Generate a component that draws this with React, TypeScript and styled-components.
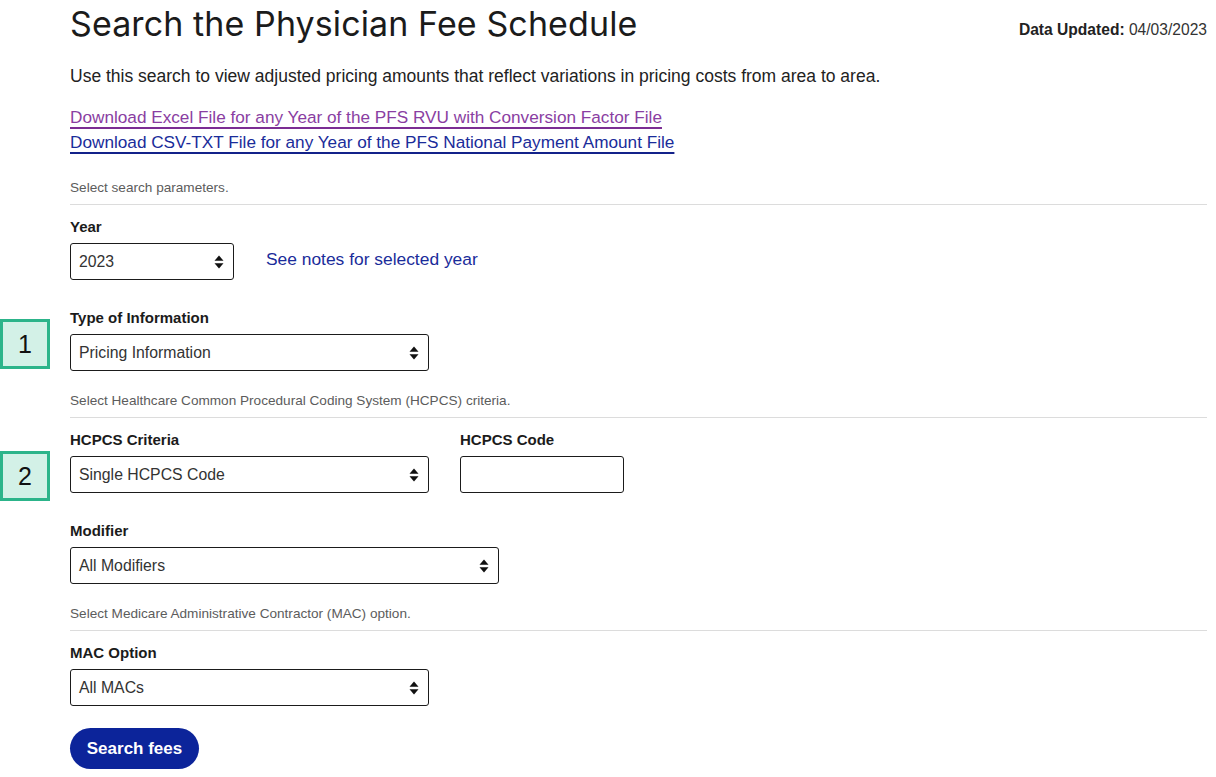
import React from "react";
import styled, { createGlobalStyle } from "styled-components";

const Global = createGlobalStyle`
  html, body { margin: 0; padding: 0; background: #fff; }
  body { font-family: "Liberation Sans", Arial, sans-serif; color: #1b1b1b; }
  * { box-sizing: border-box; }
`;

const Page = styled.div`
  padding: 0 9px 40px 70px;
  width: 1216px;
`;

const Header = styled.div`
  display: flex;
  justify-content: space-between;
  align-items: flex-start;
`;

const Title = styled.h1`
  margin: 0;
  font-family: Inter, "Open Sans", sans-serif;
  font-weight: 400;
  font-size: 34px;
  line-height: 48px;
  color: #1b1b1b;
  letter-spacing: 0.1px;
`;

const Updated = styled.div`
  margin-top: 20px;
  font-size: 15.6px;
  line-height: 20px;
  color: #333;
  b { color: #222; }
`;

const Intro = styled.p`
  margin: 16px 0 0;
  font-size: 17.5px;
  line-height: 24px;
  color: #222;
`;

const Links = styled.div`
  margin-top: 17px;
  display: flex;
  flex-direction: column;
  align-items: flex-start;
`;

const FileLink = styled.a<{ $visited?: boolean }>`
  font-size: 17.2px;
  line-height: 25px;
  color: ${(p) => (p.$visited ? "#8a3ea2" : "#1a2c9a")};
  text-decoration: underline;
  text-decoration-thickness: 2px;
  text-underline-offset: 4px;
  text-decoration-color: ${(p) => (p.$visited ? "#7b2d93" : "#13228a")};
`;

const Hint = styled.div<{ $top: number }>`
  margin-top: ${(p) => p.$top}px;
  font-size: 13.6px;
  line-height: 18px;
  color: #5c5c5c;
  padding-bottom: 7px;
  border-bottom: 1px solid #dcdcdc;
`;

const Row = styled.div<{ $top: number }>`
  position: relative;
  margin-top: ${(p) => p.$top}px;
  display: flex;
  align-items: flex-end;
  gap: 31px;
`;

const Field = styled.div`
  display: flex;
  flex-direction: column;
`;

const Label = styled.label`
  font-size: 15px;
  line-height: 20px;
  font-weight: 700;
  color: #1b1b1b;
  margin-bottom: 6px;
`;

const SelectBox = styled.div<{ $w: number }>`
  width: ${(p) => p.$w}px;
  height: 37px;
  border: 1.5px solid #1b1b1b;
  border-radius: 3px;
  display: flex;
  align-items: center;
  justify-content: space-between;
  padding: 0 9px 0 8px;
  font-size: 15.8px;
  color: #333;
  background: #fff;
`;

const TextInput = styled.div`
  width: 164px;
  height: 37px;
  border: 1.5px solid #1b1b1b;
  border-radius: 3px;
  background: #fff;
`;

const NotesLink = styled.a`
  font-size: 17.4px;
  line-height: 24px;
  color: #1a2c9a;
  text-decoration: none;
  margin: 0 0 9px 1px;
`;

const Badge = styled.div<{ $top: number }>`
  position: absolute;
  left: -70px;
  top: ${(p) => p.$top}px;
  width: 50px;
  height: 50px;
  border: 3px solid #2cb48a;
  background: #d3f1e7;
  display: flex;
  align-items: center;
  justify-content: center;
  font-family: "Liberation Sans", Arial, sans-serif;
  font-size: 25px;
  color: #111;
`;

const Button = styled.button`
  margin-top: 22px;
  height: 41px;
  width: 129px;
  border: none;
  border-radius: 21px;
  background: #0c249a;
  color: #fff;
  font-family: "Liberation Sans", Arial, sans-serif;
  font-weight: 700;
  font-size: 17px;
  cursor: pointer;
`;

const Carets = () => (
  <svg width="10" height="14" viewBox="0 0 10 14">
    <path d="M5 0.5 L9.5 5.8 H0.5 Z" fill="#111" />
    <path d="M5 13.5 L9.5 8.2 H0.5 Z" fill="#111" />
  </svg>
);

const Select = ({ w, value }: { w: number; value: string }) => (
  <SelectBox $w={w}>
    <span>{value}</span>
    <Carets />
  </SelectBox>
);

export default function App() {
  return (
    <>
      <Global />
      <Page>
        <Header>
          <Title>Search the Physician Fee Schedule</Title>
          <Updated>
            <b>Data Updated:</b> 04/03/2023
          </Updated>
        </Header>
        <Intro>
          Use this search to view adjusted pricing amounts that reflect variations in pricing costs from area to area.
        </Intro>
        <Links>
          <FileLink href="#" $visited>
            Download Excel File for any Year of the PFS RVU with Conversion Factor File
          </FileLink>
          <FileLink href="#">
            Download CSV-TXT File for any Year of the PFS National Payment Amount File
          </FileLink>
        </Links>

        <Hint $top={24}>Select search parameters.</Hint>

        <Row $top={12}>
          <Field>
            <Label>Year</Label>
            <Select w={164} value="2023" />
          </Field>
          <NotesLink href="#">See notes for selected year</NotesLink>
        </Row>

        <Row $top={28}>
          <Badge $top={11}>1</Badge>
          <Field>
            <Label>Type of Information</Label>
            <Select w={359} value="Pricing Information" />
          </Field>
        </Row>

        <Hint $top={21}>Select Healthcare Common Procedural Coding System (HCPCS) criteria.</Hint>

        <Row $top={12}>
          <Badge $top={21}>2</Badge>
          <Field>
            <Label>HCPCS Criteria</Label>
            <Select w={359} value="Single HCPCS Code" />
          </Field>
          <Field>
            <Label>HCPCS Code</Label>
            <TextInput />
          </Field>
        </Row>

        <Row $top={28}>
          <Field>
            <Label>Modifier</Label>
            <Select w={429} value="All Modifiers" />
          </Field>
        </Row>

        <Hint $top={21}>Select Medicare Administrative Contractor (MAC) option.</Hint>

        <Row $top={12}>
          <Field>
            <Label>MAC Option</Label>
            <Select w={359} value="All MACs" />
          </Field>
        </Row>

        <Button>Search fees</Button>
      </Page>
    </>
  );
}
